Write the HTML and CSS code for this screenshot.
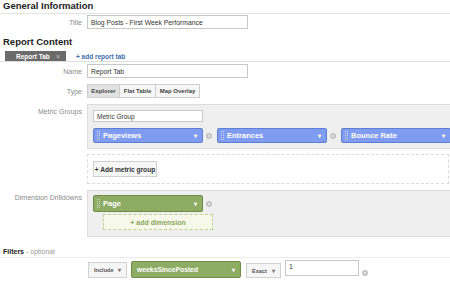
FILE: index.html
```html
<!DOCTYPE html>
<html>
<head>
<meta charset="utf-8">
<link rel="stylesheet" href="styles.css">
</head>
<body>
<div class="page">
  <div class="heading heading-first">General Information</div>
  <div class="row row-title">
    <div class="label">Title</div>
    <div class="input input-wide">Blog Posts - First Week Performance</div>
  </div>

  <div class="heading heading-report">Report Content</div>
  <div class="tabbar">
    <div class="tab"><span>Report Tab</span><span class="tab-x">×</span></div>
    <div class="add-tab">+ add report tab</div>
  </div>
  <div class="row row-name">
    <div class="label">Name</div>
    <div class="input input-wide">Report Tab</div>
  </div>
  <div class="row row-type">
    <div class="label">Type</div>
    <div class="seg">
      <div class="seg-btn active">Explorer</div>
      <div class="seg-btn">Flat Table</div>
      <div class="seg-btn">Map Overlay</div>
    </div>
  </div>

  <div class="row row-metric">
    <div class="label label-top">Metric Groups</div>
    <div class="col">
      <div class="graybox metric-box">
        <div class="input input-group">Metric Group</div>
        <div class="pills">
          <div class="pill blue"><span class="grip"></span><span class="pill-text">Pageviews</span><span class="arrow">▾</span></div>
          <span class="dot"></span>
          <div class="pill blue"><span class="grip"></span><span class="pill-text">Entrances</span><span class="arrow">▾</span></div>
          <span class="dot"></span>
          <div class="pill blue"><span class="grip"></span><span class="pill-text">Bounce Rate</span><span class="arrow">▾</span></div>
          <span class="dot"></span>
        </div>
      </div>
      <div class="dashbox">
        <div class="btn">+ Add metric group</div>
      </div>
    </div>
  </div>

  <div class="row row-dim">
    <div class="label label-top">Dimension Drilldowns</div>
    <div class="graybox dim-box">
      <div class="pills">
        <div class="pill green pill-page"><span class="grip"></span><span class="pill-text">Page</span><span class="arrow">▾</span></div>
        <span class="dot"></span>
      </div>
      <div class="add-dim">+ add dimension</div>
    </div>
  </div>

  <div class="heading heading-filters"><b>Filters</b> <span class="optional">- optional</span></div>
  <div class="filter-row">
    <div class="select sel-include">Include <span class="sel-arrow">▾</span></div>
    <div class="pill green pill-filter"><span class="pill-text">weeksSincePosted</span><span class="arrow">▾</span></div>
    <div class="select sel-exact">Exact <span class="sel-arrow">▾</span></div>
    <div class="input input-value">1</div>
    <span class="dot dot-filter"></span>
  </div>
</div>
</body>
</html>
```

FILE: styles.css
```css
html, body {
  margin: 0;
  padding: 0;
  background: #ffffff;
}
body {
  width: 450px;
  height: 281px;
  overflow: hidden;
  font-family: "Liberation Sans", Arial, sans-serif;
  font-size: 7px;
  color: #333;
  white-space: nowrap;
}
.page {
  display: flex;
  flex-direction: column;
  width: 450px;
}
.heading {
  font-weight: bold;
  font-size: 9.5px;
  color: #222;
  padding-left: 3px;
  line-height: 12px;
}
.heading-first {
  height: 13px;
  border-bottom: 1px solid #e4e4e4;
}
.heading-report {
  margin-top: 7px;
  height: 12px;
}
.heading-filters {
  margin-top: 9px;
  font-size: 7px;
  height: 11px;
  line-height: 11px;
  border-bottom: 1px solid #ececec;
  font-weight: normal;
}
.heading-filters b {
  font-weight: bold;
  color: #222;
}
.optional {
  color: #999;
}
.row {
  display: flex;
  align-items: center;
}
.label {
  width: 82px;
  flex: none;
  padding-right: 5px;
  text-align: right;
  color: #8a8a8a;
  font-size: 7px;
}
.label-top {
  align-self: flex-start;
  padding-top: 4px;
}
.row-title {
  margin-top: 1px;
}
.input {
  box-sizing: border-box;
  border: 1px solid #c8c8c8;
  background: #fff;
  font-size: 6.8px;
  color: #333;
  padding: 0 3px;
  display: flex;
  align-items: center;
}
.input-wide {
  width: 161px;
  height: 14px;
}
.tabbar {
  margin-top: 3px;
  display: flex;
  align-items: center;
  border-bottom: 1px solid #dedede;
  padding-left: 5px;
  height: 10px;
}
.tab {
  width: 61px;
  height: 10px;
  box-sizing: border-box;
  background: #6b6b6b;
  color: #fff;
  font-weight: bold;
  font-size: 6.5px;
  display: flex;
  align-items: center;
  justify-content: space-between;
  padding: 0 6px 0 11px;
  align-self: flex-end;
}
.tab-x {
  color: #c4c4c4;
  font-weight: normal;
  font-size: 7px;
}
.add-tab {
  margin-left: 10px;
  color: #3d6fae;
  font-weight: bold;
  font-size: 6.5px;
}
.row-name {
  margin-top: 2px;
}
.row-type {
  margin-top: 6px;
}
.seg {
  display: flex;
  height: 14px;
}
.seg-btn {
  box-sizing: border-box;
  height: 14px;
  border: 1px solid #cfcfcf;
  background: #f7f7f7;
  font-size: 6px;
  font-weight: bold;
  color: #444;
  display: flex;
  align-items: center;
  justify-content: center;
  margin-left: -1px;
}
.seg-btn:first-child {
  margin-left: 0;
}
.seg-btn.active {
  background: #e2e2e2;
  width: 33px;
}
.seg-btn:nth-child(2) {
  width: 37px;
}
.seg-btn:nth-child(3) {
  width: 45px;
}
.row-metric {
  margin-top: 6px;
  align-items: flex-start;
}
.col {
  display: flex;
  flex-direction: column;
}
.graybox {
  box-sizing: border-box;
  background: #efefef;
  border: 1px solid #dcdcdc;
  width: 380px;
  flex: none;
}
.metric-box {
  padding: 5px;
  height: 45px;
}
.input-group {
  width: 110px;
  height: 12px;
  font-size: 6.5px;
}
.pills {
  display: flex;
  align-items: center;
}
.metric-box .pills {
  margin-top: 6px;
}
.pill {
  box-sizing: border-box;
  width: 110px;
  height: 15px;
  border-radius: 2px;
  display: flex;
  align-items: center;
  color: #fff;
  font-weight: bold;
  font-size: 7.5px;
  padding: 0 5px 0 3px;
  flex: none;
}
.blue {
  background: #7f9cf0;
  border: 1px solid #5f7fd6;
}
.green {
  background: #8eac64;
  border: 1px solid #6f8d47;
}
.grip {
  width: 1px;
  height: 9px;
  border-left: 1px dotted rgba(255, 255, 255, 0.6);
  border-right: 1px dotted rgba(255, 255, 255, 0.6);
  margin-right: 3px;
  flex: none;
}
.pill-text {
  flex: 1;
}
.arrow {
  font-size: 6px;
  color: #fff;
}
.dot {
  width: 6px;
  height: 6px;
  border-radius: 50%;
  background: radial-gradient(circle, #e6e6e6 0 1.3px, #c2c2c2 1.6px);
  margin: 0 5px 0 3px;
  flex: none;
}
.dashbox {
  box-sizing: border-box;
  margin-top: 5px;
  width: 362px;
  height: 30px;
  border: 1px dashed #dadada;
  padding: 6px 5px;
}
.btn {
  box-sizing: border-box;
  width: 64px;
  height: 16px;
  border: 1px solid #d0d0d0;
  background: #f6f6f6;
  font-size: 6.6px;
  font-weight: bold;
  color: #333;
  display: flex;
  align-items: center;
  justify-content: center;
}
.row-dim {
  margin-top: 6px;
  align-items: flex-start;
}
.dim-box {
  height: 47px;
  padding: 4px 5px 5px 5px;
}
.pill-page {
  height: 17px;
}
.add-dim {
  box-sizing: border-box;
  margin: 2px 0 0 10px;
  width: 110px;
  height: 16px;
  border: 1px dashed #bfd28f;
  background: #f6f9ea;
  color: #8aa55e;
  font-weight: bold;
  font-size: 7px;
  display: flex;
  align-items: center;
  justify-content: center;
}
.filter-row {
  display: flex;
  align-items: center;
  padding-left: 88px;
  margin-top: 2px;
  height: 19px;
}
.select {
  box-sizing: border-box;
  border: 1px solid #d2d2d2;
  background: #f5f5f5;
  font-size: 5.6px;
  font-weight: bold;
  color: #555;
  display: flex;
  align-items: center;
  justify-content: space-between;
  padding: 0 5px;
  flex: none;
}
.sel-arrow {
  font-size: 6px;
  color: #777;
}
.sel-include {
  width: 39px;
  height: 16px;
}
.pill-filter {
  margin-left: 4px;
  width: 110px;
  height: 17px;
  padding: 0 5px;
  font-size: 6.8px;
}
.sel-exact {
  margin-left: 5px;
  width: 35px;
  height: 15px;
  align-self: flex-end;
  margin-bottom: 1px;
}
.input-value {
  margin-left: 4px;
  width: 74px;
  height: 16px;
  align-self: flex-start;
  align-items: flex-start;
  padding-top: 2px;
  font-size: 7px;
}
.dot-filter {
  margin-left: 3px;
  align-self: flex-end;
  margin-bottom: 3px;
}
```
